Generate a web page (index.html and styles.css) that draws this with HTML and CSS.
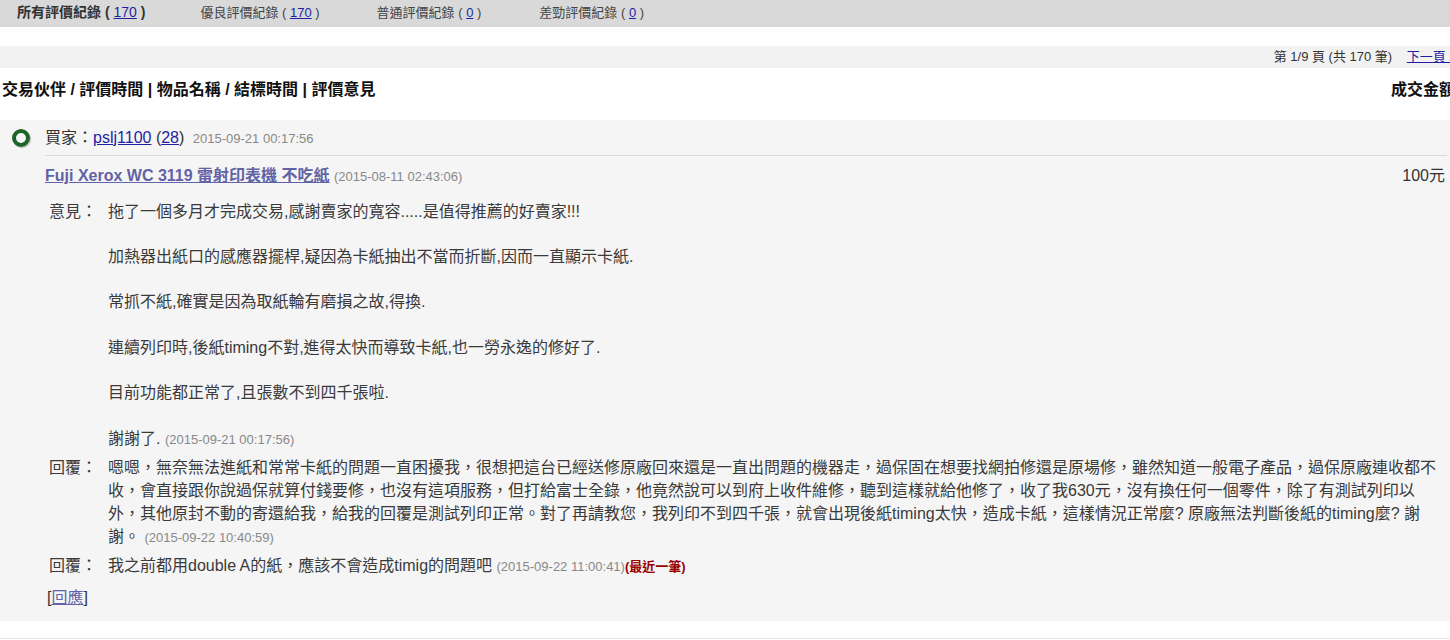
FILE: index.html
```html
<!DOCTYPE html>
<html lang="zh-Hant">
<head>
<meta charset="UTF-8" />
<title>評價紀錄</title>
<link rel="stylesheet" href="styles.css">
</head>
<body>
<div class="page">

  <ul class="tabs">
    <li class="on">所有評價紀錄 ( <a href="#">170</a> )</li>
    <li>優良評價紀錄 ( <a href="#">170</a> )</li>
    <li>普通評價紀錄 ( <a href="#">0</a> )</li>
    <li>差勁評價紀錄 ( <a href="#">0</a> )</li>
  </ul>

  <div class="pager">第 1/9 頁 (共 170 筆) <a href="#">下一頁 &gt;</a></div>

  <div class="thead">
    <span>交易伙伴 / 評價時間 | 物品名稱 / 結標時間 | 評價意見</span>
    <span class="amount">成交金額</span>
  </div>

  <div class="item">
    <div class="mark"><span class="ring"></span></div>
    <div class="body">
      <div class="rater">買家：<a href="#">pslj1100</a> (<a href="#">28</a>) <span class="date">2015-09-21 00:17:56</span></div>
      <div class="product-row">
        <div><a class="product" href="#">Fuji Xerox WC 3119 雷射印表機 不吃紙</a> <span class="date">(2015-08-11 02:43:06)</span></div>
        <div class="price">100元</div>
      </div>
      <div class="notes">
        <div class="note">
          <div class="label">意見：</div>
          <div class="text">拖了一個多月才完成交易,感謝賣家的寬容.....是值得推薦的好賣家!!!<br><br>加熱器出紙口的感應器擺桿,疑因為卡紙抽出不當而折斷,因而一直顯示卡紙.<br><br>常抓不紙,確實是因為取紙輪有磨損之故,得換.<br><br>連續列印時,後紙timing不對,進得太快而導致卡紙,也一勞永逸的修好了.<br><br>目前功能都正常了,且張數不到四千張啦.<br><br>謝謝了. <span class="date">(2015-09-21 00:17:56)</span></div>
        </div>
        <div class="note">
          <div class="label">回覆：</div>
          <div class="text">嗯嗯，無奈無法進紙和常常卡紙的問題一直困擾我，很想把這台已經送修原廠回來還是一直出問題的機器走，過保固在想要找網拍修還是原場修，雖然知道一般電子產品，過保原廠連收都不收，會直接跟你說過保就算付錢要修，也沒有這項服務，但打給富士全錄，他竟然說可以到府上收件維修，聽到這樣就給他修了，收了我630元，沒有換任何一個零件，除了有測試列印以外，其他原封不動的寄還給我，給我的回覆是測試列印正常。對了再請教您，我列印不到四千張，就會出現後紙timing太快，造成卡紙，這樣情況正常麼? 原廠無法判斷後紙的timing麼? 謝謝。 <span class="date">(2015-09-22 10:40:59)</span></div>
        </div>
        <div class="note">
          <div class="label">回覆：</div>
          <div class="text">我之前都用double A的紙，應該不會造成timig的問題吧 <span class="date">(2015-09-22 11:00:41)</span><b class="latest">(最近一筆)</b></div>
        </div>
      </div>
      <div class="reply">[<a href="#">回應</a>]</div>
    </div>
  </div>

  <div class="rule"></div>

</div>
</body>
</html>
```

FILE: styles.css
```css
* {
  box-sizing: border-box;
}
body {
  margin: 0;
  overflow: hidden;
  background: #fff;
  color: #333;
  font-family: "Liberation Sans", Arial, "Noto Sans CJK TC", sans-serif;
}
a {
  color: #1f1fa3;
}
.page {
  width: 1458px;
}
/* Onglets */
.tabs {
  display: flex;
  margin: 0;
  padding: 0 0 0 17px;
  list-style: none;
  height: 27px;
  line-height: 25px;
  background: #d9d9d9;
  font-size: 13px;
  color: #444;
}
.tabs li {
  margin-right: 58px;
}
.tabs li:nth-child(2) {
  margin-right: 57px;
}
.tabs li.on {
  font-size: 14px;
  font-weight: bold;
  color: #333;
  margin-right: 55px;
}
.tabs li.on a {
  font-weight: normal;
}
/* Pagination */
.pager {
  margin-top: 19px;
  height: 22px;
  line-height: 22px;
  background: #f2f2f2;
  text-align: right;
  font-size: 13px;
  padding-right: 1px;
}
.pager a {
  margin-left: 11px;
}
/* En-tête */
.thead {
  display: flex;
  justify-content: space-between;
  padding: 12px 0 20px 2px;
  line-height: 20px;
  font-size: 16px;
  font-weight: bold;
  color: #111;
}
.thead .amount {
  width: 70px;
  text-align: center;
}
/* Une évaluation */
.item {
  display: flex;
  background: #f5f5f5;
  padding: 7px 0 12px 0;
}
.mark {
  width: 45px;
  padding-left: 12px;
  padding-top: 2px;
}
.ring {
  display: block;
  width: 18px;
  height: 18px;
  border: 4px solid #1b6428;
  border-radius: 50%;
  box-shadow: 1px 1px 1px rgba(0,0,0,0.25);
}
.body {
  flex: 1;
  padding-right: 11px;
  font-size: 16px;
}
.rater {
  line-height: 22px;
  padding-bottom: 5px;
  border-bottom: 1px solid #dcdcdc;
}
.rater .date {
  margin-left: 4px;
}
.date {
  font-size: 13px;
  color: #888;
}
.product-row {
  display: flex;
  justify-content: space-between;
  margin-top: 9px;
  line-height: 22px;
}
.product {
  font-weight: bold;
  color: #6262a6;
}
.price {
  padding-right: 2px;
}
.notes {
  margin-top: 9px;
}
.note {
  display: flex;
  padding: 3.5px 0;
  line-height: 1.42;
  color: #3a3a3a;
}
.note .label {
  width: 63px;
  padding-left: 4px;
  flex-shrink: 0;
}
.note .text {
  flex: 1;
  padding-right: 5px;
}
.latest {
  font-size: 13px;
  color: #990000;
}
.reply {
  margin-top: 5px;
  padding-left: 2px;
  line-height: 1.42;
}
.reply a {
  color: #6262a6;
}
.rule {
  margin-top: 17px;
  border-top: 1px solid #e8e8e8;
}
```
